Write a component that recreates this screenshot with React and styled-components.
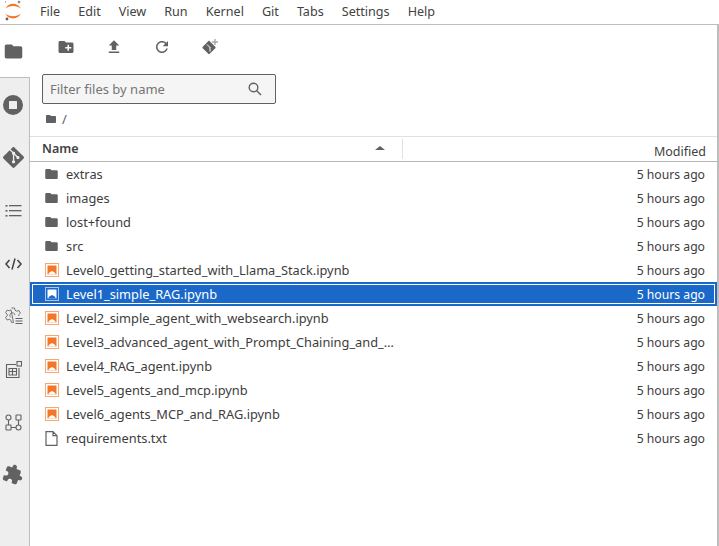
import React from 'react';
import styled, { createGlobalStyle } from 'styled-components';
import { SiGit } from 'react-icons/si';

const GlobalStyle = createGlobalStyle`
  html, body { margin: 0; padding: 0; height: 100%; background: #fff; overflow: hidden; }
  #root { height: 100%; }
  * { box-sizing: border-box; }
`;

const Page = styled.div`
  display: flex;
  flex-direction: column;
  width: 719px;
  height: 546px;
  font-family: "Noto Sans", "Liberation Sans", sans-serif;
  font-size: 13px;
  color: #3d3d3d;
`;

const MenuBar = styled.header`
  display: flex;
  align-items: center;
  gap: 18px;
  height: 25px;
  flex: none;
  border-bottom: 1px solid #bdbdbd;
`;

const LogoBox = styled.div`
  width: 22px;
  padding-left: 4px;
  display: flex;
  align-items: center;
`;

const MenuItem = styled.span`
  padding-bottom: 2px;
  font-size: 12.6px;
  color: #424242;
`;

const Body = styled.div`
  display: flex;
  flex: 1;
  min-height: 0;
`;

const SideBar = styled.nav`
  width: 30px;
  flex: none;
  display: flex;
  flex-direction: column;
  background: #eeeeee;
  border-right: 1px solid #bdbdbd;
`;

const SideTab = styled.div`
  height: 53px;
  flex: none;
  display: flex;
  align-items: center;
  justify-content: center;
  padding-right: 3px;
  color: #616161;
  ${({ $active }) => $active && `
    width: 30px;
    background: #fff;
    border-bottom: 1px solid #bdbdbd;
  `}
`;

const Panel = styled.main`
  flex: 1;
  min-width: 0;
  display: flex;
  flex-direction: column;
  border-right: 2px solid #bdbdbd;
`;

const Toolbar = styled.div`
  display: flex;
  align-items: center;
  height: 44px;
  padding-left: 27px;
  gap: 30px;
  color: #616161;
  flex: none;
`;

const ToolButton = styled.div`
  width: 18px;
  height: 18px;
  display: flex;
  align-items: center;
  justify-content: center;
  flex: none;
`;

const FilterBox = styled.div`
  display: flex;
  align-items: center;
  justify-content: space-between;
  width: 234px;
  height: 30px;
  margin: 5px 0 0 12px;
  padding: 0 13px 0 7px;
  background: #f5f5f5;
  border: 1px solid #616161;
  border-radius: 2px;
  color: #757575;
  flex: none;
`;

const Crumbs = styled.div`
  display: flex;
  align-items: center;
  height: 32px;
  padding: 0 0 3px 15px;
  gap: 5px;
  color: #616161;
  flex: none;
`;

const ListHeader = styled.div`
  display: flex;
  align-items: center;
  height: 26px;
  flex: none;
  border-top: 1px solid #e0e0e0;
  border-bottom: 1px solid #b5b5b5;
`;

const NameCol = styled.div`
  display: flex;
  align-items: center;
  justify-content: space-between;
  width: 373px;
  height: 20px;
  padding: 0 17px 2px 12px;
  border-right: 1px solid #e0e0e0;
  font-weight: 600;
  font-size: 12.5px;
  color: #424242;
`;

const ModifiedCol = styled.div`
  flex: 1;
  text-align: right;
  padding: 4px 11px 0 0;
  font-size: 12.5px;
  color: #424242;
`;

const Caret = styled.span`
  width: 0;
  height: 0;
  border-left: 5px solid transparent;
  border-right: 5px solid transparent;
  border-bottom: 4px solid #616161;
`;

const Rows = styled.ul`
  list-style: none;
  margin: 0;
  padding: 0;
`;

const Row = styled.li`
  display: flex;
  align-items: center;
  height: 24px;
  padding: 0 12px 0 14px;
  color: ${({ $selected }) => ($selected ? '#fff' : '#3d3d3d')};
  background: ${({ $selected }) => ($selected ? '#1a68c8' : 'transparent')};
  ${({ $selected }) => $selected && `
    box-shadow: inset 0 0 0 2px #1a68c8, inset 0 0 0 3px #fff;
  `}
`;

const RowIcon = styled.span`
  display: flex;
  align-items: center;
  justify-content: center;
  width: 15px;
  height: 16px;
  margin-right: 7px;
  flex: none;
  color: #616161;
`;

const RowName = styled.span`
  flex: 1;
  min-width: 0;
  max-width: 329px;
  white-space: nowrap;
  overflow: hidden;
  text-overflow: ellipsis;
  font-size: 12.8px;
`;

const RowDate = styled.span`
  margin-left: auto;
  font-size: 12.2px;
`;

const Ico = ({ size = 16, d, ...rest }) => (
  <svg width={size} height={size} viewBox="0 0 24 24" fill="currentColor" {...rest}>
    <path d={d} />
  </svg>
);

const FOLDER = 'M10 4H4c-1.1 0-1.99.9-1.99 2L2 18c0 1.1.9 2 2 2h16c1.1 0 2-.9 2-2V8c0-1.1-.9-2-2-2h-8l-2-2z';
const NEW_FOLDER = 'M20 6h-8l-2-2H4c-1.11 0-1.99.89-1.99 2L2 18c0 1.11.89 2 2 2h16c1.11 0 2-.89 2-2V8c0-1.11-.89-2-2-2zm-1 8h-3v3h-2v-3h-3v-2h3V9h2v3h3v2z';
const UPLOAD = 'M9 16h6v-6h4l-7-7-7 7h4zm-4 2h14v2H5z';
const REFRESH = 'M17.65 6.35C16.2 4.9 14.21 4 12 4c-4.42 0-7.99 3.58-7.99 8s3.57 8 7.99 8c3.73 0 6.84-2.55 7.73-6h-2.08c-.82 2.33-3.04 4-5.65 4-3.31 0-6-2.69-6-6s2.69-6 6-6c1.66 0 3.14.69 4.22 1.78L13 11h7V4l-2.35 2.35z';
const PUZZLE = 'M20.5 11H19V7c0-1.1-.9-2-2-2h-4V3.5C13 2.12 11.88 1 10.5 1S8 2.12 8 3.5V5H4c-1.1 0-1.99.9-1.99 2v3.8H3.5c1.49 0 2.7 1.21 2.7 2.7s-1.21 2.7-2.7 2.7H2V20c0 1.1.9 2 2 2h3.8v-1.5c0-1.49 1.21-2.7 2.7-2.7 1.49 0 2.7 1.21 2.7 2.7V22H17c1.1 0 2-.9 2-2v-4h1.5c1.38 0 2.5-1.12 2.5-2.5S21.88 11 20.5 11z';

const JupyterLogo = () => (
  <svg width="18" height="24" viewBox="0 0 18 24">
    <path d="M1.500 8.500C4 2 14 2 16.800 8.500C13 5 5 5 1.500 8.500Z" fill="#f37726" />
    <path d="M1.500 13.500C5 17 13 17 16.800 13.500C14 20 4 20 1.500 13.500Z" fill="#f37726" />
    <circle cx="15" cy="2" r="1.300" fill="#8a8a8a" />
    <circle cx="1.500" cy="2" r="0.700" fill="#8a8a8a" />
    <circle cx="3" cy="19" r="1.400" fill="#616161" />
  </svg>
);

const StopIcon = () => (
  <svg width="20" height="20" viewBox="0 0 20 20">
    <circle cx="10" cy="10" r="10" fill="#616161" />
    <rect x="6" y="6" width="8" height="8" rx="0.500" fill="#eeeeee" />
  </svg>
);

const GitClone = () => (
  <svg width="18" height="18" viewBox="0 0 18 18">
    <path
      d="M7 3.500l-6.300 6.300a1 1 0 0 0 0 1.400l5.600 5.600a1 1 0 0 0 1.400 0l5.600-5.600a1 1 0 0 0 0-1.400L7.700 4.200z"
      fill="#616161"
      transform="translate(1 -1)"
    />
    <path d="M6 6.500l3.500 3.500M9 9.500v4" stroke="#fff" strokeWidth="1" fill="none" />
    <path d="M13.300 1h1.400v2.300H17v1.400h-2.300V7h-1.400V4.700H11V3.300h2.300z" fill="#a8a8a8" />
  </svg>
);

const ListIcon = () => (
  <svg width="17" height="14" viewBox="0 0 17 14" fill="#616161">
    <rect x="0.500" y="1" width="2" height="1.600" />
    <rect x="4" y="1" width="12.500" height="1.300" />
    <rect x="0.500" y="6" width="2" height="1.600" />
    <rect x="4" y="6" width="12.500" height="1.300" />
    <rect x="0.500" y="11" width="2" height="1.600" />
    <rect x="4" y="11" width="12.500" height="1.300" />
  </svg>
);

const CodeIcon = () => (
  <svg width="17" height="12" viewBox="0 0 17 12" fill="none" stroke="#424242" strokeWidth="1.500">
    <path d="M4.500 2L1 6l3.500 4M12.500 2L16 6l-3.500 4M10 0.500L7 11.500" />
  </svg>
);

const GearList = () => (
  <svg width="19" height="19" viewBox="0 0 19 19" fill="none" stroke="#757575" strokeWidth="1" strokeLinejoin="round">
    <path d="M7.500 1h3l.5 2.200 1.700 1 2.200-.7 1.500 2.600-1.600 1.500v1.400M9.500 15.500h-2l-.5-2.200-1.700-1-2.200.7-1.500-2.600 1.600-1.500V7.200L1.600 5.700 3.100 3.100l2.200.7 1.700-1z" />
    <path d="M7 10.500a2.600 2.600 0 1 1 4-2.500" />
    <path d="M11.500 11.500h7M11.500 14h7M11.500 16.500h7" stroke="#616161" strokeWidth="1.200" />
  </svg>
);

const PropertyIcon = () => (
  <svg width="17" height="17" viewBox="0 0 17 17" fill="none" stroke="#616161" strokeWidth="1.100">
    <path d="M11 3.500H1.500v13H14V7" />
    <rect x="12" y="0.500" width="4.500" height="4.500" />
    <path d="M4 7.500h7.500v6.500H4zM4 10.500h7.500M7.500 7.500v6.500" />
  </svg>
);

const GraphIcon = () => (
  <svg width="17" height="17" viewBox="0 0 17 17" fill="none" stroke="#616161" strokeWidth="1.100">
    <circle cx="3.500" cy="3.500" r="2.500" />
    <rect x="11" y="1" width="5" height="5" rx="0.500" />
    <rect x="1" y="11" width="5" height="5" rx="0.500" />
    <circle cx="13.500" cy="13.500" r="2.500" />
    <path d="M3.500 6v5M13.500 6v5M6 13.500h5" />
  </svg>
);

const SearchIcon = () => (
  <svg width="14" height="14" viewBox="0 0 14 14" fill="none" stroke="#616161" strokeWidth="1.400">
    <circle cx="5.500" cy="5.500" r="4.300" />
    <path d="M8.700 8.700L13 13" />
  </svg>
);

const NotebookIcon = ({ selected }) => {
  const main = selected ? '#fff' : '#f37726';
  const notch = selected ? '#1a68c8' : '#fff';
  return (
    <svg width="14" height="14" viewBox="0 0 14 14">
      <rect x="0.500" y="0.500" width="13" height="13" fill="none" stroke={selected ? '#a8c8ee' : '#f9a873'} />
      <rect x="2.500" y="2.500" width="9" height="9" fill={main} />
      <path d="M3 11.500L4.500 9.500L7 8L9.500 9.500L11 11.500z" fill={notch} />
    </svg>
  );
};

const TextIcon = () => (
  <svg width="13" height="15" viewBox="0 0 13 15" fill="none" stroke="#616161" strokeWidth="1.200">
    <path d="M1 .700h7l4 4v9.600H1zM8 .700v4h4" />
  </svg>
);

const menus = ['File', 'Edit', 'View', 'Run', 'Kernel', 'Git', 'Tabs', 'Settings', 'Help'];

const files = [
  { name: 'extras', type: 'dir' },
  { name: 'images', type: 'dir' },
  { name: 'lost+found', type: 'dir' },
  { name: 'src', type: 'dir' },
  { name: 'Level0_getting_started_with_Llama_Stack.ipynb', type: 'nb' },
  { name: 'Level1_simple_RAG.ipynb', type: 'nb', selected: true },
  { name: 'Level2_simple_agent_with_websearch.ipynb', type: 'nb' },
  { name: 'Level3_advanced_agent_with_Prompt_Chaining_and_Reflection.ipynb', type: 'nb' },
  { name: 'Level4_RAG_agent.ipynb', type: 'nb' },
  { name: 'Level5_agents_and_mcp.ipynb', type: 'nb' },
  { name: 'Level6_agents_MCP_and_RAG.ipynb', type: 'nb' },
  { name: 'requirements.txt', type: 'txt' },
];

export default function App() {
  return (
    <Page>
      <GlobalStyle />
      <MenuBar>
        <LogoBox><JupyterLogo /></LogoBox>
        {menus.map((label) => (
          <MenuItem key={label}>{label}</MenuItem>
        ))}
      </MenuBar>
      <Body>
        <SideBar>
          <SideTab $active><Ico size={21} d={FOLDER} /></SideTab>
          <SideTab><StopIcon /></SideTab>
          <SideTab><SiGit size={21} color="#616161" /></SideTab>
          <SideTab><ListIcon /></SideTab>
          <SideTab><CodeIcon /></SideTab>
          <SideTab><GearList /></SideTab>
          <SideTab><PropertyIcon /></SideTab>
          <SideTab><GraphIcon /></SideTab>
          <SideTab><Ico size={21} d={PUZZLE} style={{ transform: 'translateY(-1px) rotate(20deg)' }} /></SideTab>
        </SideBar>
        <Panel>
          <Toolbar>
            <ToolButton><Ico size={18} d={NEW_FOLDER} /></ToolButton>
            <ToolButton><Ico size={18} d={UPLOAD} /></ToolButton>
            <ToolButton><Ico size={18} d={REFRESH} /></ToolButton>
            <ToolButton><GitClone /></ToolButton>
          </Toolbar>
          <FilterBox>
            Filter files by name
            <SearchIcon />
          </FilterBox>
          <Crumbs>
            <Ico size={12} d={FOLDER} />
            /
          </Crumbs>
          <ListHeader>
            <NameCol>Name<Caret /></NameCol>
            <ModifiedCol>Modified</ModifiedCol>
          </ListHeader>
          <Rows>
            {files.map((f) => (
              <Row key={f.name} $selected={f.selected}>
                <RowIcon>
                  {f.type === 'dir' && <Ico size={18} d={FOLDER} />}
                  {f.type === 'nb' && <NotebookIcon selected={f.selected} />}
                  {f.type === 'txt' && <TextIcon />}
                </RowIcon>
                <RowName>{f.name}</RowName>
                <RowDate>5 hours ago</RowDate>
              </Row>
            ))}
          </Rows>
        </Panel>
      </Body>
    </Page>
  );
}
